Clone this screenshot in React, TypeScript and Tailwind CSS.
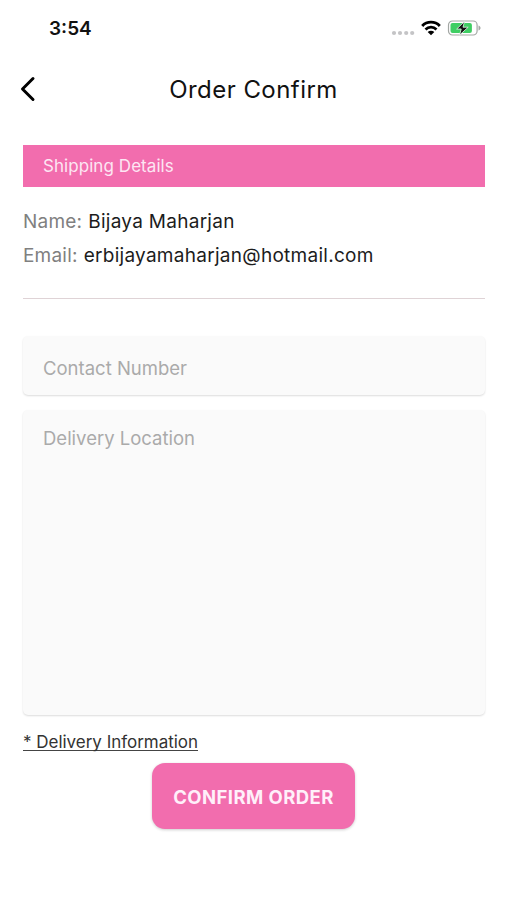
import React from "react";

function StatusBar() {
  return (
    <div className="flex h-14 items-center justify-between pl-[49px] pr-[26px]">
      <span className="pt-[2px] text-[19px] leading-6 font-semibold text-[#111]">3:54</span>
      <div className="flex items-center">
        <svg width="24" height="6" viewBox="0 0 24 6" className="mt-[9px]" fill="#c4c4c6">
          <circle cx="3" cy="3" r="2.1" />
          <circle cx="9" cy="3" r="2.1" />
          <circle cx="15.2" cy="3" r="2.1" />
          <circle cx="21.2" cy="3" r="2.1" />
        </svg>
        <svg width="20" height="16" viewBox="0 0 20 16" className="ml-[6px]" fill="none" stroke="#000">
          <path d="M1.2 5.9C6 .9 14 .9 18.8 5.9" strokeWidth="2.9" />
          <path d="M4.5 9.5C7.6 6.4 12.4 6.4 15.5 9.5" strokeWidth="2.7" />
          <path d="M10 15.300L6.700 12C8.600 10.200 11.400 10.200 13.300 12Z" fill="#000" stroke="none" />
        </svg>
        <svg width="34" height="18" viewBox="0 0 34 18" className="ml-[6px]">
          <rect x="1.500" y="2" width="28.6" height="14" rx="4" fill="#fff" stroke="#a3a7a4" strokeWidth="1.2" />
          <rect x="3.500" y="4" width="21.4" height="10" rx="2" fill="#3fce63" />
          <path d="M31.500 6.5v5c1.6-.7 2-1.500 2-2.500s-.4-1.800-2-2.500Z" fill="#a3a7a4" />
          <path d="M17.500 2.500L9.700 10h4.500l-1.600 6L21.200 8.200h-5.200Z" fill="#111" stroke="#e8faed" strokeWidth=".8" />
        </svg>
      </div>
    </div>
  );
}

function Header() {
  return (
    <header className="grid h-[65px] grid-cols-[60px_1fr_60px] items-center">
      <button aria-label="Back" className="pl-5">
        <svg width="16" height="26" viewBox="0 0 16 26" fill="none" stroke="#000" strokeWidth="3" strokeLinejoin="round" strokeLinecap="round">
          <path d="M13 2.500L2.500 13L13 23.500" />
        </svg>
      </button>
      <h1 className="pt-[2px] text-center text-[24px] leading-8 tracking-[0.45px] text-[#111]">Order Confirm</h1>
    </header>
  );
}

function Detail({ label, value }: { label: string; value: string }) {
  return (
    <p className="flex h-[34px] items-center gap-[6px] whitespace-nowrap text-[19px]">
      <span className="tracking-[0.2px] text-[#808080]">{label}</span>
      <span className="tracking-[0.28px] text-[#1c1c1c]">{value}</span>
    </p>
  );
}

export default function App() {
  return (
    <div className="h-[900px] w-[507px] overflow-hidden bg-white font-['Inter',sans-serif]">
      <StatusBar />
      <Header />
      <main className="flex flex-col pl-[23px] pr-[22px] pt-6">
        <h2 className="flex h-[42px] items-center bg-[#f26dae] pt-[2px] pl-5 text-[17px] tracking-[0.06px] text-[#fde6f3]">Shipping Details</h2>
        <div className="mt-[18px] border-b border-[#dfd3d6] pb-[25px]">
          <Detail label="Name:" value="Bijaya Maharjan" />
          <Detail label="Email:" value="erbijayamaharjan@hotmail.com" />
        </div>
        <input
          placeholder="Contact Number"
          className="mt-[37px] h-[59px] rounded-[5px] bg-[#fafafa] px-5 pt-[5px] text-[18.500px] shadow-[0_1px_2px_rgba(0,0,0,0.14)] placeholder:text-[#aaa]"
        />
        <textarea
          placeholder="Delivery Location"
          className="mt-[15px] h-[305px] resize-none rounded-[5px] bg-[#fafafa] px-5 pt-4 text-[18.500px] leading-6 shadow-[0_1px_2px_rgba(0,0,0,0.14)] placeholder:text-[#aaa]"
        />
        <a className="mt-[19px] self-start border-b border-[#444] text-[17px] leading-[16px] tracking-[-0.02px] text-[#333]">* Delivery Information</a>
        <button className="mt-[12px] mr-px h-[66px] w-[203px] self-center rounded-[13px] bg-[#f26dae] pt-[3px] text-[18.500px] font-bold tracking-[0.42px] text-[#fff0fa] shadow-[0_1px_3px_rgba(0,0,0,0.2)]">
          CONFIRM ORDER
        </button>
      </main>
    </div>
  );
}
